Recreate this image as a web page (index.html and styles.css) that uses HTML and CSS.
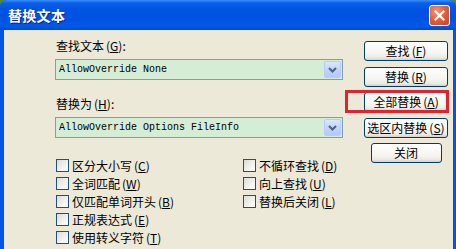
FILE: index.html
```html
<!DOCTYPE html>
<html lang="zh-CN">
<head>
<meta charset="utf-8">
<title>替换文本</title>
<link rel="stylesheet" href="styles.css">
</head>
<body>
<div class="window">
  <div class="titlebar">
    <span class="title">替换文本</span>
    <span class="close">
      <svg width="11" height="11" viewBox="0 0 11 11"><path d="M1.5 1.5 L9.5 9.5 M9.5 1.5 L1.5 9.5" stroke="#fff" stroke-width="2.2" stroke-linecap="square"/></svg>
    </span>
  </div>
  <div class="frame">
    <div class="left">
      <div class="label">查找文本<span class="mn">(<u>G</u>):</span></div>
      <div class="combo">
        <span class="combo-text">AllowOverride None</span>
        <span class="drop"><svg width="9" height="6" viewBox="0 0 9 6"><path d="M1 1 L4.5 4.5 L8 1" fill="none" stroke="#4d6185" stroke-width="2"/></svg></span>
      </div>
      <div class="label label2">替换为<span class="mn">(<u>H</u>):</span></div>
      <div class="combo">
        <span class="combo-text">AllowOverride Options FileInfo</span>
        <span class="drop"><svg width="9" height="6" viewBox="0 0 9 6"><path d="M1 1 L4.5 4.5 L8 1" fill="none" stroke="#4d6185" stroke-width="2"/></svg></span>
      </div>
      <div class="checks">
        <div class="check-col col-a">
          <div class="check"><span class="box"></span>区分大小写<span class="mn">(<u>C</u>)</span></div>
          <div class="check"><span class="box"></span>全词匹配<span class="mn">(<u>W</u>)</span></div>
          <div class="check"><span class="box"></span>仅匹配单词开头<span class="mn">(<u>B</u>)</span></div>
          <div class="check"><span class="box"></span>正规表达式<span class="mn">(<u>E</u>)</span></div>
          <div class="check"><span class="box"></span>使用转义字符<span class="mn">(<u>T</u>)</span></div>
        </div>
        <div class="check-col">
          <div class="check"><span class="box"></span>不循环查找<span class="mn">(<u>D</u>)</span></div>
          <div class="check"><span class="box"></span>向上查找<span class="mn">(<u>U</u>)</span></div>
          <div class="check"><span class="box"></span>替换后关闭<span class="mn">(<u>L</u>)</span></div>
        </div>
      </div>
    </div>
    <div class="right">
      <div class="btn">查找<span class="mn">(<u>F</u>)</span></div>
      <div class="btn">替换<span class="mn">(<u>R</u>)</span></div>
      <div class="btn highlighted">全部替换<span class="mn">(<u>A</u>)</span><span class="redbox"></span></div>
      <div class="btn">选区内替换<span class="mn">(<u>S</u>)</span></div>
      <div class="btn btn-close">关闭</div>
    </div>
  </div>
</div>
</body>
</html>
```
FILE: styles.css
```css
* { box-sizing: border-box; }
html, body {
  margin: 0;
  padding: 0;
  width: 456px;
  height: 249px;
  overflow: hidden;
  background: #4f8a3a;
}
body {
  font-family: "Noto Sans CJK SC", "Noto Sans", sans-serif;
  font-size: 12px;
  color: #000;
}
.window {
  width: 456px;
  height: 249px;
  display: flex;
  flex-direction: column;
  border-radius: 7px 7px 0 0;
  overflow: hidden;
  background: #0055e5;
}
.titlebar {
  height: 30px;
  flex: none;
  display: flex;
  align-items: center;
  justify-content: space-between;
  padding: 0 6px 0 8px;
  background: linear-gradient(to bottom, #3d8dff 0%, #0a5fe6 10%, #0054e3 30%, #0052e0 60%, #0059ea 88%, #0048d0 100%);
}
.title {
  color: #fff;
  font-weight: bold;
  font-size: 14px;
  letter-spacing: 0.3px;
  text-shadow: 1px 1px 0 #0a1f8a;
  line-height: 16px;
}
.close {
  width: 21px;
  height: 21px;
  border: 1px solid #fff;
  border-radius: 3px;
  background: radial-gradient(circle at 35% 30%, #f09a80 0%, #e0623f 45%, #c8411f 100%);
  display: flex;
  align-items: center;
  justify-content: center;
  margin-top: 1px;
}
.frame {
  flex: 1;
  display: flex;
  align-items: flex-start;
  background: #ece9d8;
  margin: 0 3px 0 4px;
}
.left {
  padding: 8px 0 0 51px;
  width: 339px;
  display: flex;
  flex-direction: column;
}
.label {
  height: 16px;
  line-height: 16px;
  padding-left: 1px;
}
.label2 { margin-top: 16px; }
.mn { padding-left: 2px; }
.combo {
  margin-top: 5px;
  width: 288px;
  height: 21px;
  border: 1px solid #7f9db9;
  background: #d5ecd5;
  display: flex;
  align-items: center;
  justify-content: space-between;
  padding: 0 1px 0 3px;
}
.combo-text {
  font-family: "Liberation Mono", monospace;
  font-size: 10px;
  line-height: 14px;
  display: inline-block;
  transform: scaleY(1.15);
}
.drop {
  width: 17px;
  height: 17px;
  border: 1px solid #b8ccf4;
  border-radius: 2px;
  background: linear-gradient(to bottom, #dce6fd 0%, #c2d3fc 50%, #b4c9fa 100%);
  display: flex;
  align-items: center;
  justify-content: center;
}
.checks {
  margin-top: 18px;
  display: flex;
  padding-left: 1px;
}
.check-col {
  display: flex;
  flex-direction: column;
}
.col-a { width: 187px; }
.check {
  height: 18px;
  display: flex;
  align-items: center;
}
.box {
  width: 13px;
  height: 13px;
  border: 1px solid #1c5180;
  background: linear-gradient(135deg, #dcdcd7 0%, #f2f2ef 60%, #ffffff 100%);
  margin-right: 3px;
  flex: none;
}
.right {
  margin-left: auto;
  padding: 11px 5px 0 0;
  display: flex;
  flex-direction: column;
  align-items: center;
  gap: 5.5px;
  width: 89px;
}
.btn {
  position: relative;
  width: 84px;
  height: 20px;
  border: 1px solid #003c74;
  border-radius: 3px;
  background: linear-gradient(to bottom, #ffffff 0%, #f6f5f1 60%, #ecebe5 85%, #d6d0c5 100%);
  display: flex;
  align-items: center;
  justify-content: center;
  line-height: 16px;
}
.btn-close { width: 71px; }
.redbox {
  position: absolute;
  left: -20px;
  right: -2px;
  top: -3px;
  bottom: -2px;
  border: 3px solid #e3232b;
  pointer-events: none;
}
```
